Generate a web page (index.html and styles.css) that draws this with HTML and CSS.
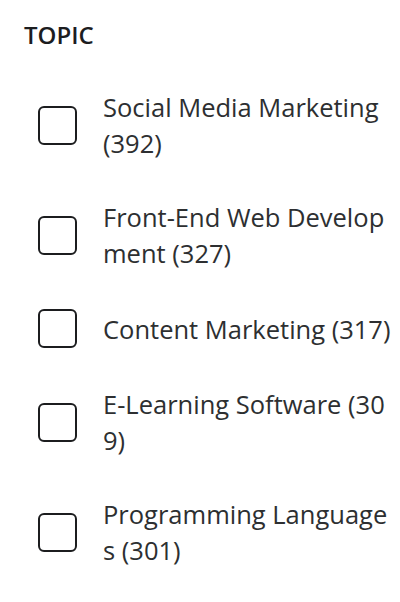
FILE: index.html
```html
<!DOCTYPE html>
<html lang="en">
<head>
<meta charset="utf-8">
<link rel="stylesheet" href="styles.css">
</head>
<body>
<section class="filter">
  <h2 class="filter-title">TOPIC</h2>
  <ul class="options">
    <li class="option"><span class="box"></span><span class="label">Social Media Marketing (392)</span></li>
    <li class="option"><span class="box"></span><span class="label">Front-End Web Development (327)</span></li>
    <li class="option"><span class="box"></span><span class="label">Content Marketing (317)</span></li>
    <li class="option"><span class="box"></span><span class="label">E-Learning Software (309)</span></li>
    <li class="option"><span class="box"></span><span class="label">Programming Languages (301)</span></li>
  </ul>
</section>
</body>
</html>
```
FILE: styles.css
```css
html, body {
  margin: 0;
  padding: 0;
  background: #fff;
}
body {
  font-family: "Open Sans", "Liberation Sans", sans-serif;
  color: #2d2f31;
}
.filter {
  padding: 17px 7px 0 24px;
}
.filter-title {
  margin: 0 0 17px 0;
  font-size: 24px;
  line-height: 36px;
  font-weight: 600;
  color: #1c1d1f;
}
.options {
  list-style: none;
  margin: 0;
  padding: 0;
}
.option {
  display: flex;
  align-items: center;
  padding: 19px 0;
  gap: 26px;
}
.box {
  flex: none;
  width: 35px;
  height: 35px;
  margin-left: 14px;
  border: 2px solid #1c1d1f;
  border-radius: 6px;
}
.label {
  flex: 1;
  min-width: 0;
  font-size: 25.5px;
  line-height: 36px;
  word-break: break-all;
}
```
